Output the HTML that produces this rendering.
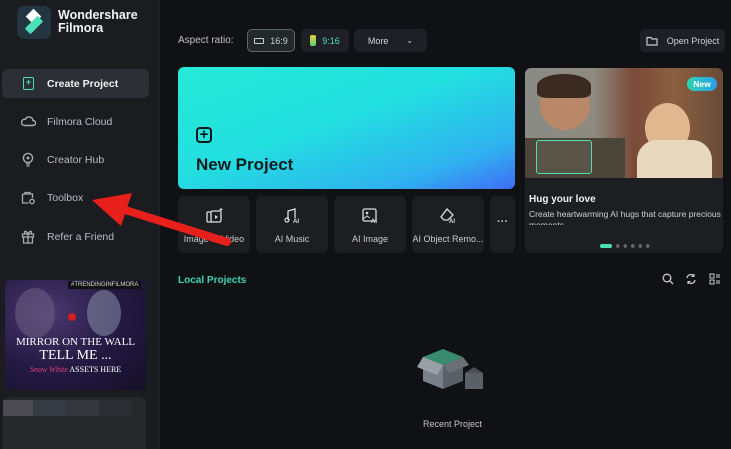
<!DOCTYPE html>
<html><head><meta charset="utf-8"><style>
*{margin:0;padding:0;box-sizing:border-box}
body{width:731px;height:449px;overflow:hidden;background:#0f1115;font-family:"Liberation Sans",sans-serif;position:relative;color:#d8dadd}
.sb{position:absolute;left:0;top:0;width:160px;height:449px;background:#1a1c20;border-right:1px solid #202226}
.abs{position:absolute}
.nav{position:absolute;left:47px;font-size:10.5px;color:#b9bcc1}
.btn{position:absolute;background:#1e2025;border-radius:5px;font-size:9px;color:#d0d2d6;display:flex;align-items:center;justify-content:center;gap:6px}
.tool{position:absolute;top:196px;width:72px;height:57px;background:#1c1e22;border-radius:6px;font-size:9px;color:#c9ccd0;text-align:center}
.tool span{position:absolute;left:0;right:0;top:38px;white-space:nowrap}
.tool svg{position:absolute;left:28px;top:12px}
</style></head><body>
<div class="sb"></div>
<div class="abs" style="left:17px;top:6px;width:34px;height:33px;border-radius:7px;background:#243542"></div>
<div class="abs" style="left:28px;top:11px;width:11px;height:11px;background:#fff;transform:rotate(45deg)"></div>
<div class="abs" style="left:25px;top:21px;width:18px;height:8px;background:#4de0b7;transform:rotate(-45deg);border-radius:1px"></div>
<div class="abs" style="left:58px;top:9px;font-size:12.5px;font-weight:bold;color:#f2f3f5;line-height:13px">Wondershare<br>Filmora</div>
<div class="abs" style="left:2px;top:69px;width:147px;height:29px;background:#2c2f35;border-radius:6px"></div>
<div class="abs" style="left:23px;top:77px;width:11px;height:13px;border:1.6px solid #4de0b7;border-radius:2px;font-size:9px;color:#4de0b7;line-height:9px;text-align:center;font-weight:bold">+</div>
<div class="nav" style="top:78px;color:#f0f1f3;font-weight:bold">Create Project</div>
<svg class="abs" style="left:21px;top:115px" width="15" height="12" viewBox="0 0 15 12"><path d="M3 10.5h9a2.5 2.5 0 0 0 0-5 4 4 0 0 0-7.6-1.2A3 3 0 0 0 3 10.5z" fill="none" stroke="#a8abb0" stroke-width="1.4"/></svg>
<div class="nav" style="top:116px">Filmora Cloud</div>
<svg class="abs" style="left:22px;top:152px" width="12" height="15" viewBox="0 0 12 15"><circle cx="6" cy="6" r="4.6" fill="none" stroke="#a8abb0" stroke-width="1.4"/><circle cx="6" cy="6" r="1.5" fill="#a8abb0"/><path d="M4 12h4M4.5 14h3" stroke="#a8abb0" stroke-width="1.3"/></svg>
<div class="nav" style="top:154px">Creator Hub</div>
<svg class="abs" style="left:21px;top:191px" width="15" height="14" viewBox="0 0 15 14"><path d="M4 3V1.5h5V3M1.5 3h10v4M1.5 3v9h6" fill="none" stroke="#a8abb0" stroke-width="1.3"/><circle cx="11" cy="10.5" r="2.2" fill="none" stroke="#a8abb0" stroke-width="1.3"/></svg>
<div class="nav" style="top:192px">Toolbox</div>
<svg class="abs" style="left:21px;top:229px" width="14" height="15" viewBox="0 0 14 15"><path d="M1.5 5h11v3h-11zM2.5 8v6h9V8M7 5v9M7 5C5 1 2.5 2 4 4.5M7 5c2-4 4.5-3 3-0.5" fill="none" stroke="#a8abb0" stroke-width="1.3"/></svg>
<div class="nav" style="top:231px">Refer a Friend</div>
<div class="abs" style="left:5px;top:280px;width:141px;height:110px;border-radius:5px;background:radial-gradient(ellipse at 30% 30%,#4a3a70,#241a44 50%,#151028);overflow:hidden">
<div class="abs" style="left:10px;top:8px;width:40px;height:50px;border-radius:50%;background:#6a5a80;opacity:.6"></div>
<div class="abs" style="left:82px;top:10px;width:34px;height:46px;border-radius:50%;background:#8a90a8;opacity:.55"></div>
<div class="abs" style="left:63px;top:33px;width:8px;height:8px;border-radius:50%;background:#d02020"></div>
<div class="abs" style="left:63px;top:1px;font-size:6px;color:#ddd;background:#111;padding:1px 3px">#TRENDINGINFILMORA</div>
<div class="abs" style="left:0;right:0;top:56px;text-align:center;font-family:'Liberation Serif',serif;color:#fff;font-size:11px;line-height:13px">MIRROR ON THE WALL<br><span style="font-size:14px">TELL ME ...</span><br><span style="font-size:8px"><i style="color:#e0407a">Snow White</i> ASSETS HERE</span></div>
</div>
<div class="abs" style="left:3px;top:397px;width:143px;height:52px;background:#26282c;border-radius:6px 6px 0 0;overflow:hidden">
<div class="abs" style="left:0;top:3px;width:30px;height:16px;background:#4a4a50"></div>
<div class="abs" style="left:30px;top:3px;width:33px;height:16px;background:#353c44"></div>
<div class="abs" style="left:63px;top:3px;width:33px;height:16px;background:#35363c"></div>
<div class="abs" style="left:96px;top:3px;width:33px;height:16px;background:#2c2d32"></div>
</div>

<div class="abs" style="left:178px;top:35px;font-size:10px;color:#bfc2c6">Aspect ratio:</div>
<div class="btn" style="left:247px;top:29px;width:48px;height:23px;border:1px solid #5a6a68;background:#23282a"><span style="width:10px;height:6px;border:1.3px solid #ccc;border-radius:1px"></span>16:9</div>
<div class="btn" style="left:301px;top:29px;width:48px;height:23px;color:#4de0b7"><span style="width:6px;height:11px;border-radius:2px;background:linear-gradient(#e8d040,#5ad070)"></span>9:16</div>
<div class="btn" style="left:354px;top:29px;width:73px;height:23px;gap:18px">More <span style="font-size:8px">⌄</span></div>
<div class="btn" style="left:640px;top:29px;width:85px;height:23px;gap:9px"><svg width="12" height="10" viewBox="0 0 12 10"><path d="M1 1.5h4l1 1.5h5v6H1z" fill="none" stroke="#c8cace" stroke-width="1.2"/></svg>Open Project</div>

<div class="abs" style="left:178px;top:67px;width:337px;height:122px;border-radius:6px;background:linear-gradient(160deg,#27ead6 0%,#22dfe0 45%,#2fb2ef 80%,#3f6df6 100%)"></div>
<div class="abs" style="left:196px;top:127px;width:16px;height:16px;border:2.3px solid #0d1518;border-radius:4px;font-size:15px;line-height:11px;text-align:center;font-weight:bold;color:#0d1518">+</div>
<div class="abs" style="left:196px;top:155px;font-size:17px;font-weight:bold;color:#0e1a1e">New Project</div>

<div class="tool" style="left:178px"><svg width="18" height="16" viewBox="0 0 18 16"><rect x="1" y="4" width="6" height="10" rx="1" fill="none" stroke="#ddd" stroke-width="1.3"/><rect x="5" y="3" width="10" height="11" rx="1.5" fill="#1c1e22" stroke="#ddd" stroke-width="1.3"/><path d="M9 7l3 2-3 2z" fill="#ddd"/><path d="M15 0v3M13.5 1.5h3" stroke="#ddd"/></svg><span>Image to Video</span></div>
<div class="tool" style="left:256px"><svg width="18" height="16" viewBox="0 0 18 16"><path d="M4 12V3l7-2v9" fill="none" stroke="#ddd" stroke-width="1.3"/><circle cx="3" cy="12" r="2" fill="none" stroke="#ddd" stroke-width="1.2"/><text x="9" y="15" font-size="6" fill="#ddd" font-weight="bold" font-family="Liberation Sans">AI</text></svg><span>AI Music</span></div>
<div class="tool" style="left:334px"><svg width="18" height="16" viewBox="0 0 18 16"><rect x="1" y="1" width="13" height="12" rx="1.5" fill="none" stroke="#ddd" stroke-width="1.3"/><circle cx="5" cy="5" r="1.3" fill="#ddd"/><path d="M1 11l4-3 3 2" stroke="#ddd" fill="none"/><text x="9" y="15" font-size="6" fill="#ddd" font-weight="bold" font-family="Liberation Sans">AI</text></svg><span>AI Image</span></div>
<div class="tool" style="left:412px"><svg width="18" height="16" viewBox="0 0 18 16"><path d="M7 1l6 6-5 5H4L1 9z" fill="none" stroke="#ddd" stroke-width="1.3"/><text x="9" y="15" font-size="6" fill="#ddd" font-weight="bold" font-family="Liberation Sans">AI</text></svg><span>AI Object Remo...</span></div>
<div class="tool" style="left:490px;width:25px"><span style="top:20px;font-size:11px;font-weight:bold">···</span></div>

<div class="abs" style="left:525px;top:68px;width:198px;height:185px;border-radius:6px;background:#1c1e22;overflow:hidden">
<div class="abs" style="left:0;top:0;width:198px;height:110px;background:linear-gradient(90deg,#8a8a86 0%,#8e8a80 35%,#7a4a38 55%,#8a6040 75%,#6a4a38 100%)"></div>
<div class="abs" style="left:15px;top:12px;width:50px;height:50px;border-radius:50%;background:#b88868"></div>
<div class="abs" style="left:12px;top:6px;width:54px;height:24px;border-radius:50% 50% 20% 20%;background:#3a2a22"></div>
<div class="abs" style="left:0;top:70px;width:100px;height:40px;background:#4a4538"></div>
<div class="abs" style="left:120px;top:35px;width:45px;height:50px;border-radius:50%;background:#e0b890"></div>
<div class="abs" style="left:112px;top:72px;width:75px;height:38px;border-radius:20px 20px 0 0;background:#e8d8c0"></div>
<div class="abs" style="left:11px;top:72px;width:56px;height:34px;border:1.5px solid #4de0b7;border-radius:3px;background:#5a5448"></div>
<div class="abs" style="left:162px;top:9px;width:30px;height:14px;border-radius:7px;background:linear-gradient(90deg,#2dd4b0,#2a9fe8);color:#fff;font-size:8.5px;font-weight:bold;text-align:center;line-height:14px">New</div>
<div class="abs" style="left:4px;top:126px;font-size:10px;font-weight:bold;color:#f0f1f3">Hug your love</div>
<div class="abs" style="left:4px;top:141px;font-size:8.5px;color:#d0d2d6;line-height:11px;height:16px;overflow:hidden;width:194px">Create heartwarming AI hugs that capture precious moments.</div>
<div class="abs" style="left:75px;top:176px;width:12px;height:4px;border-radius:2px;background:#4de0b7"></div>
<div class="abs" style="left:89px;top:176px;width:38px;height:4px;background:radial-gradient(circle,#666 1.8px,transparent 2px) 0 0/7.5px 4px"></div>
</div>

<div class="abs" style="left:178px;top:275px;font-size:10px;font-weight:bold;color:#3fd6b0">Local Projects</div>
<svg class="abs" style="left:662px;top:273px" width="12" height="12" viewBox="0 0 12 12"><circle cx="5" cy="5" r="3.8" fill="none" stroke="#c8cace" stroke-width="1.3"/><path d="M8 8l3 3" stroke="#c8cace" stroke-width="1.3"/></svg>
<svg class="abs" style="left:685px;top:273px" width="12" height="12" viewBox="0 0 12 12"><path d="M2 5a4 4 0 0 1 7-2M10 7a4 4 0 0 1-7 2" fill="none" stroke="#c8cace" stroke-width="1.3"/><path d="M9 1v2.5H6.5M3 11V8.5h2.5" fill="none" stroke="#c8cace" stroke-width="1.1"/></svg>
<svg class="abs" style="left:709px;top:273px" width="12" height="12" viewBox="0 0 12 12"><rect x="1" y="1" width="4" height="4" fill="none" stroke="#c8cace"/><rect x="1" y="7" width="4" height="4" fill="none" stroke="#c8cace"/><path d="M7 2h4M7 4h4M7 8h4M7 10h4" stroke="#c8cace"/></svg>

<svg class="abs" style="left:415px;top:335px" width="75" height="62" viewBox="0 0 75 62"><path d="M8 22l20-8 20 8-20 8z" fill="#3a8a70"/><path d="M8 22l20 8v24l-20-8z" fill="#7a8088"/><path d="M28 30l20-8v24l-20 8z" fill="#5a6068"/><path d="M8 22l-6 10 20 8 6-10z" fill="#9aa0a8"/><path d="M48 22l6 8-20 8-6-8z" fill="#6a7078"/><rect x="50" y="38" width="18" height="16" fill="#5a6068"/><path d="M50 38l9-6 9 6z" fill="#4a5058"/></svg>
<div class="abs" style="left:423px;top:419px;font-size:9px;color:#c4c7cb">Recent Project</div>

<svg class="abs" style="left:0;top:0" width="731" height="449"><path d="M227 242L122 209" stroke="#e8201c" stroke-width="8" stroke-linecap="round"/><path d="M92 200L132 193L121 226z" fill="#e8201c"/></svg>
</body></html>
